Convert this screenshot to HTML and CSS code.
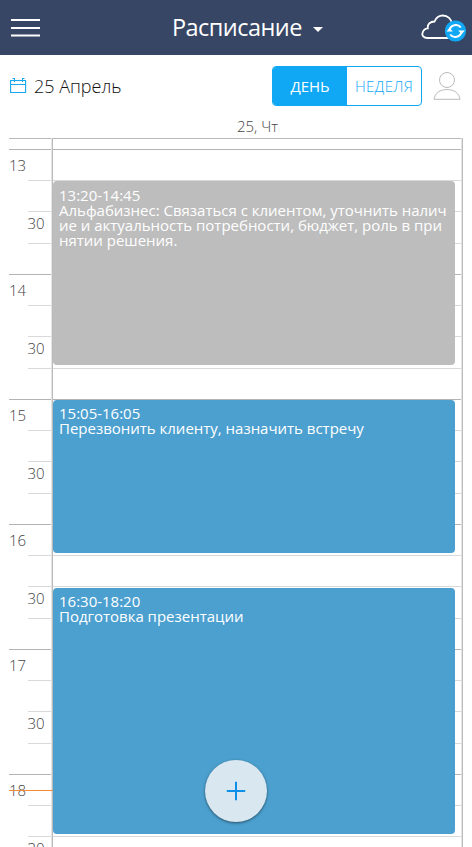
FILE: index.html
```html
<!DOCTYPE html>
<html lang="ru">
<head>
<meta charset="utf-8">
<title>Расписание</title>
<link rel="stylesheet" href="styles.css">
</head>
<body>
<header class="topbar">
  <svg class="menu" width="30" height="20" viewBox="0 0 30 20"><path d="M0 2h29M0 10h29M0 17.500h29" stroke="#fff" stroke-width="2"/></svg>
  <h1 class="title"><span class="name">Расписание</span><span class="caret"></span></h1>
  <svg class="cloud" width="46" height="30" viewBox="0 0 46 30">
    <path d="M31 25H6.500C2.500 25 .8 22.500 1.500 20c.6-2.500 2.500-4.500 5.300-4.700C6.300 11.500 9 8.500 13.500 8.500c1.500-3.500 4.500-6 8.300-6 5 0 8.700 3.500 9.200 8.500" fill="none" stroke="#fff" stroke-width="1.800"/>
    <circle cx="34.500" cy="18" r="10.600" fill="#10a8f5"/>
    <path d="M28.500 17c1-5 8-7 11.300-2.500M40.500 19c-1 5-8 7-11.300 2.500" fill="none" stroke="#fff" stroke-width="2"/>
    <path d="M25.500 18.500l3-3.800 3.300 3.800zM37.200 17.500h6.600L40.500 21.300z" fill="#fff"/>
  </svg>
</header>
<div class="toolbar">
  <svg class="calendar" width="17" height="16" viewBox="0 0 17 16"><path d="M.6 2.500h15v12H.6zM.6 6.500h15M4.500 0v4M12.500 0v4M2.500.5h2M12.500.5h2" fill="none" stroke="#18a8f0" stroke-width="1.100"/></svg>
  <span class="date">25 Апрель</span>
  <div class="switch"><span class="tab active">ДЕНЬ</span><span class="tab">НЕДЕЛЯ</span></div>
  <svg class="person" width="28" height="29" viewBox="0 0 28 29"><circle cx="14" cy="8" r="7.500" fill="none" stroke="#bbb"/><path d="M1 27.300C2 21 7 17.500 14 17.500S26 21 27 27.300z" fill="none" stroke="#bbb"/></svg>
</div>
<div class="day-name">25, Чт</div>
<main class="schedule">
  <div class="allday"></div>
  <div class="hours">
    <div class="hour"><span class="h">13</span><span class="m">30</span><i></i><i></i><i></i><i></i><b></b><b></b><b></b><b></b></div>
    <div class="hour"><span class="h">14</span><span class="m">30</span><i></i><i></i><i></i><i></i><b></b><b></b><b></b><b></b></div>
    <div class="hour"><span class="h">15</span><span class="m">30</span><i></i><i></i><i></i><i></i><b></b><b></b><b></b><b></b></div>
    <div class="hour"><span class="h">16</span><span class="m">30</span><i></i><i></i><i></i><i></i><b></b><b></b><b></b><b></b></div>
    <div class="hour"><span class="h">17</span><span class="m">30</span><i></i><i></i><i></i><i></i><b></b><b></b><b></b><b></b></div>
    <div class="hour"><span class="h">18</span><span class="m">30</span><i></i><i></i><i></i><i></i><b></b><b></b><b></b><b></b></div>
  </div>
  <article class="event e1 done">13:20-14:45<br>Альфабизнес: Связаться с клиентом, уточнить наличие и актуальность потребности, бюджет, роль в принятии решения.</article>
  <article class="event e2">15:05-16:05<br>Перезвонить клиенту, назначить встречу</article>
  <article class="event e3">16:30-18:20<br>Подготовка презентации</article>
  <div class="now"></div>
</main>
<button class="add"><svg width="20" height="20" viewBox="0 0 20 20"><path d="M10 .8v18.400M.8 10h18.400" stroke="#0e90e8" stroke-width="2"/></svg></button>
</body>
</html>
```
FILE: styles.css
```css
* { box-sizing: border-box; }
body { margin: 0; height: 847px; overflow: hidden; position: relative; background: #fff; font-family: "Open Sans", sans-serif; }
svg { display: block; flex: none; }
.topbar { height: 55px; display: grid; grid-template-columns: 60px 1fr 60px; align-items: center; background: #374665; }
.menu { margin-left: 11px; }
.title { margin: 0; padding-left: 112px; display: flex; align-items: center; color: #fff; font-size: 23.5px; font-weight: 400; line-height: 55px; }
.name { letter-spacing: -.55px; width: 130px; white-space: nowrap; }
.caret { margin: 4px 0 0 11px; border: 5px solid transparent; border-top-color: #fff; border-bottom: 0; }
.cloud { margin-left: 9px; }
.toolbar { height: 62px; display: flex; align-items: center; padding: 0 11px 0 10px; }
.date { margin-left: 7px; font-size: 18px; font-weight: 300; color: #111; flex: 1; }
.switch { display: flex; width: 150px; height: 40px; border: 1px solid #10a8f5; border-radius: 4px; overflow: hidden; }
.tab { flex: 1; text-align: center; line-height: 39px; font-size: 15px; color: #10a8f5; font-weight: 300; letter-spacing: .3px; }
.active { background: #10a8f5; color: #fff; font-weight: 400; letter-spacing: 0; }
.person { margin-left: 11px; }
.day-name { height: 21px; margin: 0 9px 0 52px; text-align: center; font-size: 15px; line-height: 18px; font-weight: 300; color: #444; }
.schedule { position: relative; height: 709px; margin: 0 9px; overflow: hidden; }
.schedule::before, .schedule::after { content: ""; position: absolute; top: 0; bottom: 0; left: 42px; width: 1px; background: #bbb; background-clip: padding-box; border-left: 1px solid #e4e4e4; }
.schedule::after { left: auto; right: 0; }
.allday { height: 11px; border-top: 1px solid #b9b9b9; }
.hour { height: 125px; display: grid; grid-template: 31px 31px 32px 31px / 19px 24px 1fr; }
.hour i, .hour b { border-top: 1px solid #d9d9d9; }
.hour i { grid-column: 2; margin-right: 1px; }
.hour b { grid-column: 3; }
.hour i:nth-of-type(1), .hour b:nth-of-type(1) { grid-row: 1; border-color: #b4b4b4; }
.hour i:nth-of-type(1) { grid-column: 1 / 3; }
.hour i:nth-of-type(2), .hour b:nth-of-type(2) { grid-row: 2; }
.hour i:nth-of-type(3), .hour b:nth-of-type(3) { grid-row: 3; }
.hour i:nth-of-type(4), .hour b:nth-of-type(4) { grid-row: 4; }
.h, .m { font-size: 15px; font-weight: 300; line-height: 20px; color: #444; white-space: nowrap; }
.h { grid-area: 1 / 1; padding-top: 6px; }
.m { grid-area: 3 / 2; padding-top: 2px; margin-left: -.5px; }
.event { position: absolute; left: 44px; width: 402px; padding: 7px 6px; border-radius: 4px; background: #4ca0cf; color: #fff; font-size: 15px; line-height: 15px; letter-spacing: -.01px; word-break: break-all; z-index: 1; }
.done { background: #bdbdbd; }
.e1 { top: 43px; height: 184px; }
.e2 { top: 262px; height: 153px; padding-top: 6px; }
.e3 { top: 450px; height: 246px; padding-top: 6px; }
.now { position: absolute; left: 0; top: 652px; width: 44px; height: 1px; background: #f58a35; z-index: 2; }
.add { position: absolute; left: 205px; top: 760px; z-index: 3; width: 62px; height: 62px; padding: 0; display: grid; place-items: center; border: 0; border-radius: 50%; background: #d8e7f0; box-shadow: 0 1px 3px rgba(0,0,0,.5); }
```
